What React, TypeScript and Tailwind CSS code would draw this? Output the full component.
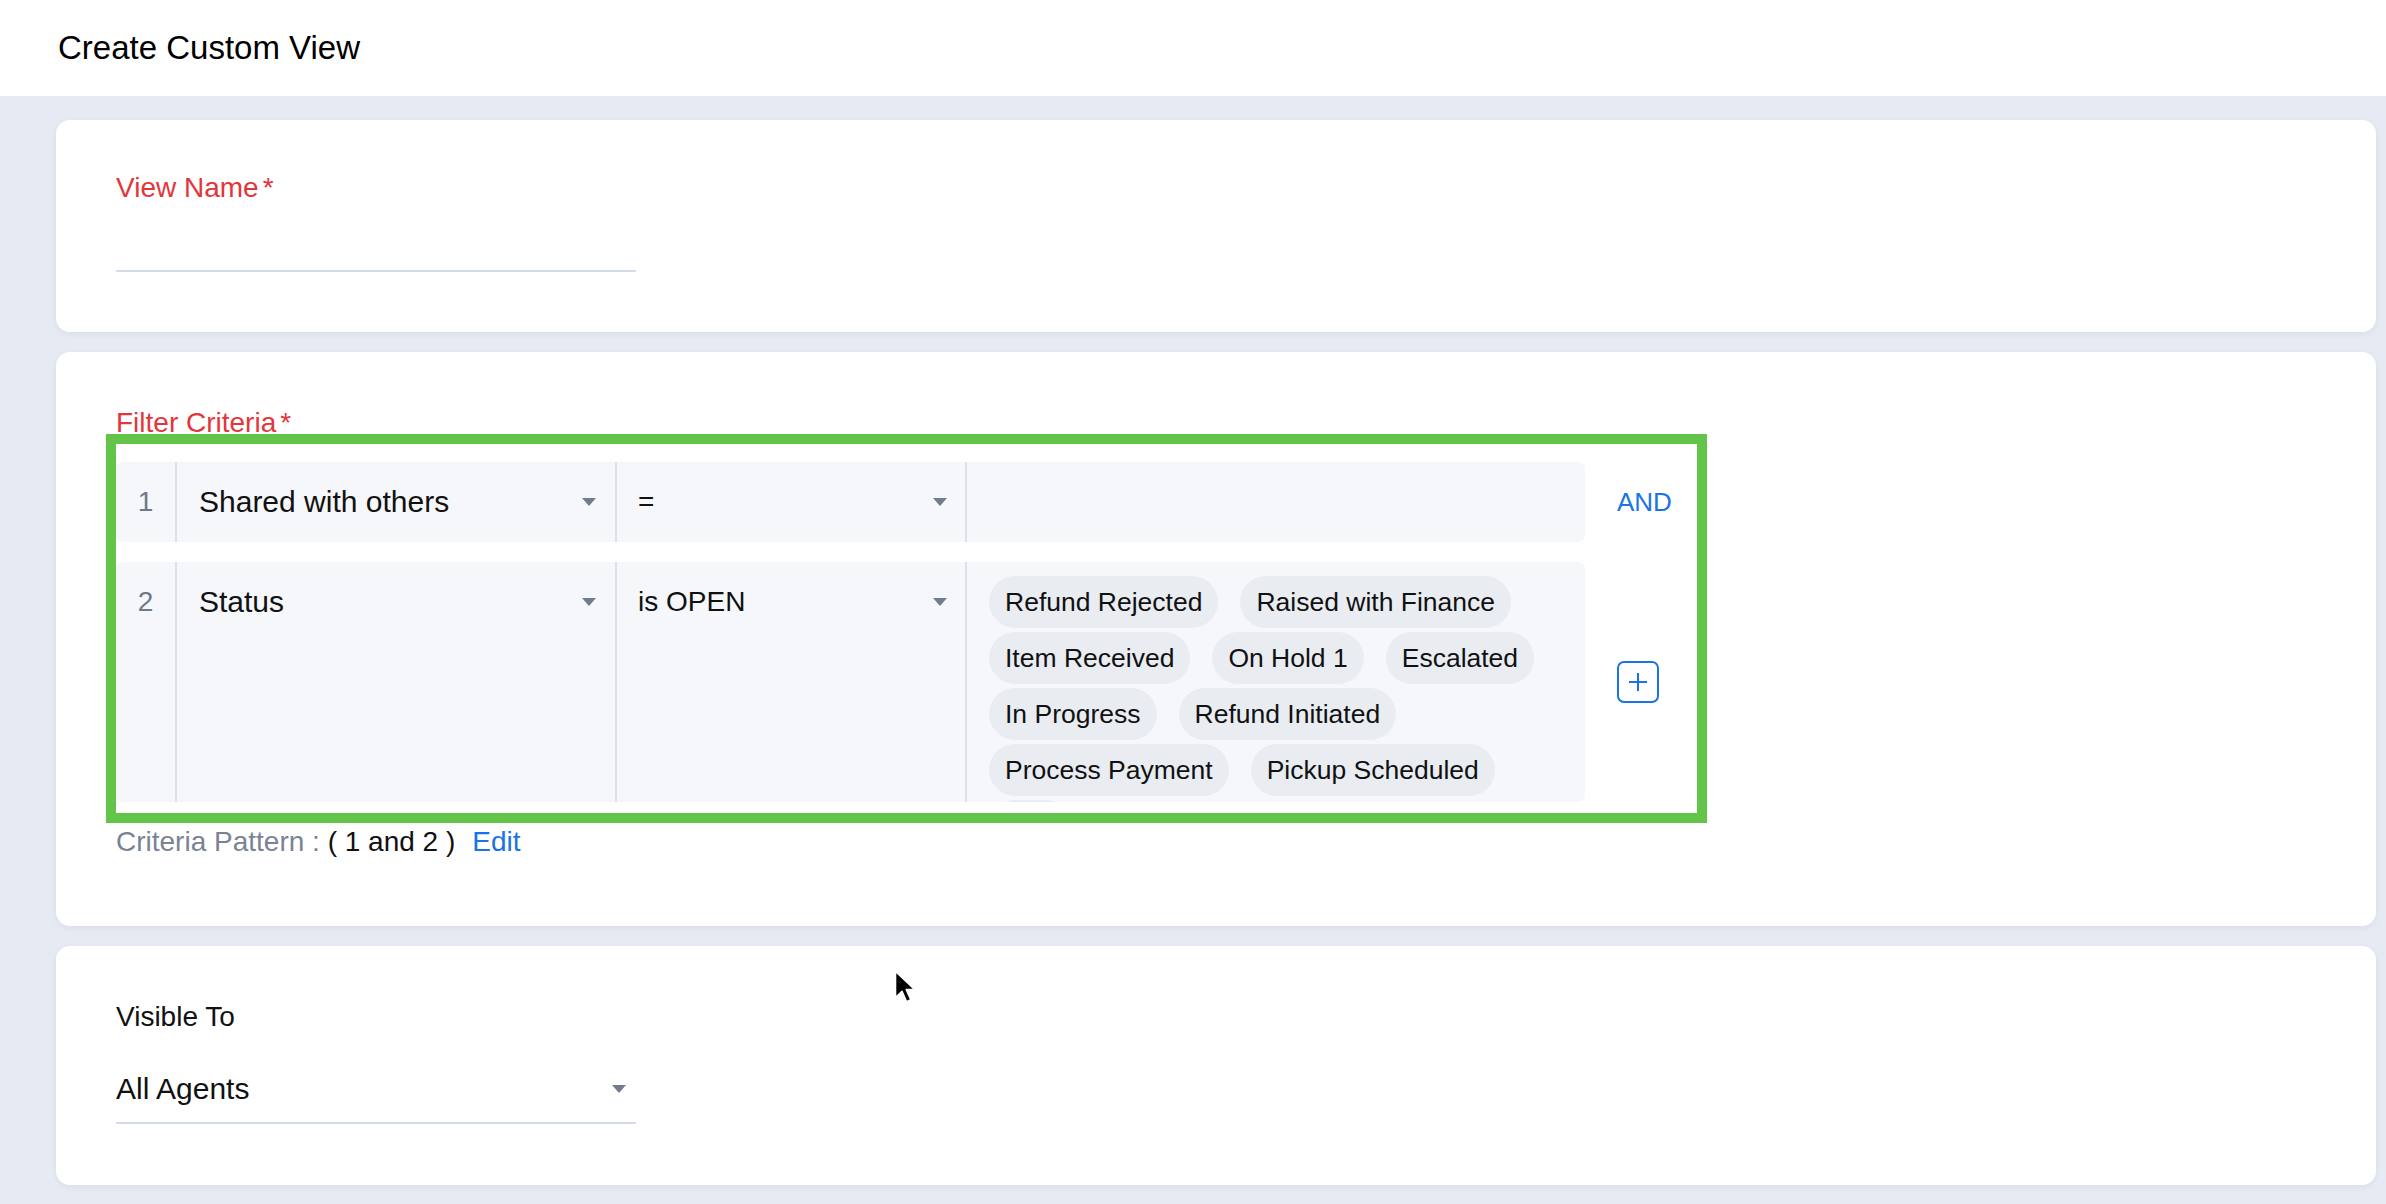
import type { ReactNode } from 'react'

const statusChips = [
  'Refund Rejected',
  'Raised with Finance',
  'Item Received',
  'On Hold 1',
  'Escalated',
  'In Progress',
  'Refund Initiated',
  'Process Payment',
  'Pickup Scheduled',
]

function Caret() {
  return (
    <svg width="14" height="8" viewBox="0 0 14 8" className="shrink-0">
      <path d="M0 0h14L7 8z" fill="#737c8c" />
    </svg>
  )
}

function Divider() {
  return <div className="w-[2px] shrink-0 bg-[#dbe1ea]" />
}

type RowProps = {
  index: number
  field: string
  operator: string
  tall?: boolean
  action: ReactNode
  children?: ReactNode
}

function CriteriaRow({ index, field, operator, tall, action, children }: RowProps) {
  return (
    <div className="flex">
      <div className={tall ? 'flex h-[240px] w-[1469px] rounded-md bg-[#f5f7fb]' : 'flex h-[80px] w-[1469px] rounded-md bg-[#f5f7fb]'}>
        <div className="flex h-[80px] w-[59px] shrink-0 items-center justify-center text-[28px] leading-[34px] text-[#6f7889]">
          {index}
        </div>
        <Divider />
        <div className="flex h-[80px] w-[438px] shrink-0 items-center justify-between pl-[22px] pr-[19px] text-[30px] leading-[36px] text-[#111]">
          <span>{field}</span>
          <Caret />
        </div>
        <Divider />
        <div className="flex h-[80px] w-[348px] shrink-0 items-center justify-between pl-[21px] pr-[18px] text-[28px] leading-[34px] text-[#111]">
          <span>{operator}</span>
          <Caret />
        </div>
        <Divider />
        <div className="flex-1 overflow-hidden">{children}</div>
      </div>
      <div className="flex w-[112px] items-center pl-[32px]">{action}</div>
    </div>
  )
}

function CursorArrow() {
  return (
    <svg
      width="22"
      height="34"
      viewBox="0 0 22 34"
      className="pointer-events-none absolute left-[894px] top-[970px]"
    >
      <path
        d="M1.5 1.5v26l6.5-6.2 4.6 10.4 4.2-1.9-4.5-10.2h8.6z"
        fill="#000"
        stroke="#fff"
        strokeWidth="1.6"
        strokeLinejoin="round"
      />
    </svg>
  )
}

export default function App() {
  return (
    <div className="relative min-h-[1204px] bg-[#e6eaf2] font-['Liberation_Sans',Arial,sans-serif]">
      <header className="flex h-[96px] items-center bg-white pl-[58px]">
        <h1 className="text-[33px] leading-[40px] font-normal text-black">Create Custom View</h1>
      </header>

      <main className="flex flex-col gap-[20px] pb-[19px] pl-[56px] pr-[10px] pt-[24px]">
        <section className="rounded-[14px] bg-white pb-[60px] pl-[60px] pt-[51px] shadow-[0_2px_6px_rgba(30,40,70,0.06)]">
          <label className="block text-[28px] leading-[34px] text-[#e3363a]">
            View Name<span className="ml-[4px]">*</span>
          </label>
          <div className="h-[67px] w-[520px] border-b-2 border-[#d3dbe6]" />
        </section>

        <section className="rounded-[14px] bg-white pb-[67px] pl-[60px] pt-[54px] shadow-[0_2px_6px_rgba(30,40,70,0.06)]">
          <label className="block text-[28px] leading-[34px] text-[#e3363a]">
            Filter Criteria<span className="ml-[4px]">*</span>
          </label>

          <div className="relative mt-[4px] flex w-[1581px] flex-col gap-[20px] bg-white pb-[11px] pt-[18px]">
            <CriteriaRow
              index={1}
              field="Shared with others"
              operator="="
              action={<span className="text-[26px] leading-[32px] text-[#1a73e8]">AND</span>}
            />
            <CriteriaRow
              index={2}
              field="Status"
              operator="is OPEN"
              tall
              action={
                <button className="flex h-[42px] w-[42px] items-center justify-center rounded-[7px] border-2 border-[#1a73e8] bg-white">
                  <svg width="20" height="20" viewBox="0 0 20 20">
                    <path d="M10 1v18M1 10h18" stroke="#1a73e8" strokeWidth="2" />
                  </svg>
                </button>
              }
            >
              <div className="flex flex-wrap gap-x-[22px] gap-y-[4px] pl-[22px] pr-[22px] pt-[14px]">
                {statusChips.map((chip) => (
                  <span
                    key={chip}
                    className="flex h-[52px] items-center rounded-full bg-[#e9edf2] px-[16px] text-[26.5px] leading-[32px] text-[#111]"
                  >
                    {chip}
                  </span>
                ))}
                {/* next chip, scrolled out of view */}
                <span className="h-[52px] w-[82px] rounded-full bg-[#e9edf2]" />
              </div>
            </CriteriaRow>

            <div className="pointer-events-none absolute -inset-[10px] z-10 border-[10px] border-[#62c448]" />
          </div>

          <p className="mt-[12px] text-[28px] leading-[34px]">
            <span className="text-[#7a8394]">Criteria Pattern :</span>
            <span className="text-[#111]"> ( 1 and 2 )</span>
            <span className="ml-[17px] text-[#1a73e8]">Edit</span>
          </p>
        </section>

        <section className="rounded-[14px] bg-white pb-[61px] pl-[60px] pt-[54px] shadow-[0_2px_6px_rgba(30,40,70,0.06)]">
          <label className="block text-[28px] leading-[34px] text-[#111]">Visible To</label>
          <div className="mt-[38px] flex w-[520px] items-center justify-between border-b-2 border-[#d3dbe6] pb-[16px] pr-[10px]">
            <span className="text-[30px] leading-[34px] text-[#111]">All Agents</span>
            <Caret />
          </div>
        </section>
      </main>

      <CursorArrow />
    </div>
  )
}
